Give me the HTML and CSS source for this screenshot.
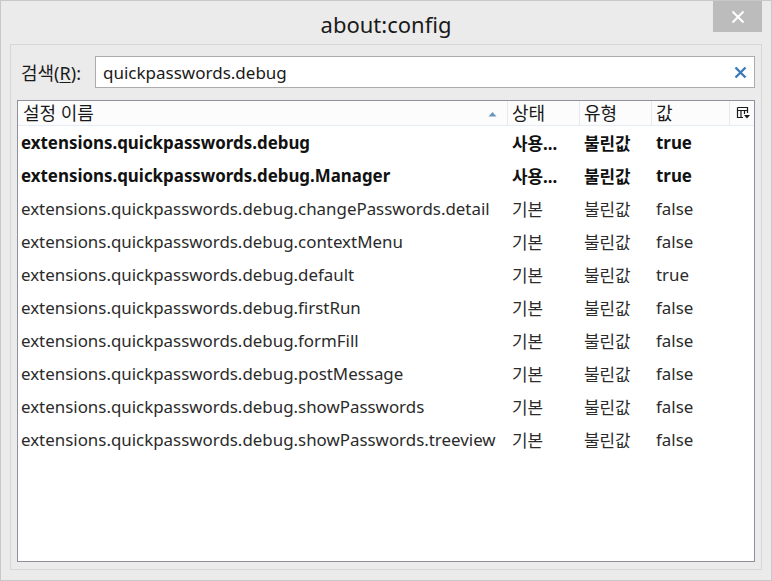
FILE: index.html
```html
<!DOCTYPE html>
<html lang="ko">
<head>
<meta charset="utf-8">
<link rel="stylesheet" href="styles.css">
</head>
<body>
<div class="window">
  <div class="titlebar">
    <div class="title">about:config</div>
    <div class="close">
      <svg width="14" height="14" viewBox="0 0 14 14"><path d="M1.5 1.5 L12.5 12.5 M12.5 1.5 L1.5 12.5" stroke="#fff" stroke-width="2" fill="none"/></svg>
    </div>
  </div>
  <div class="panel">
    <div class="search-row">
      <label class="search-label">검색(<u>R</u>):</label>
      <div class="search-box">
        <span class="search-text">quickpasswords.debug</span>
        <svg class="clear" width="13" height="13" viewBox="0 0 13 13"><path d="M1.5 1.5 L11.5 11.5 M11.5 1.5 L1.5 11.5" stroke="#3d7ab8" stroke-width="2.4" fill="none"/></svg>
      </div>
    </div>
    <div class="tree">
      <div class="row header">
        <div class="cell name">설정 이름<svg class="sort" width="9" height="6" viewBox="0 0 9 6"><path d="M0.5 5.5 L4.5 1 L8.5 5.5 Z" fill="#6a95bf"/></svg></div>
        <div class="cell status">상태</div>
        <div class="cell type">유형</div>
        <div class="cell value">값</div>
        <div class="cell picker">
          <svg width="15" height="14" viewBox="0 0 15 14"><path d="M1.5 1.5 H11.5 V7 M1.5 1.5 V11.5 H7 M1.5 4.5 H11.5 M5 4.5 V11.5 M8.5 4.5 V8" stroke="#1a1a1a" stroke-width="1.2" fill="none"/><path d="M8 9 H14 L11 12.5 Z" fill="#1a1a1a"/></svg>
        </div>
      </div>
      <div class="row bold"><div class="cell name">extensions.quickpasswords.debug</div><div class="cell status">사용...</div><div class="cell type">불린값</div><div class="cell value">true</div></div>
      <div class="row bold"><div class="cell name">extensions.quickpasswords.debug.Manager</div><div class="cell status">사용...</div><div class="cell type">불린값</div><div class="cell value">true</div></div>
      <div class="row"><div class="cell name">extensions.quickpasswords.debug.changePasswords.detail</div><div class="cell status">기본</div><div class="cell type">불린값</div><div class="cell value">false</div></div>
      <div class="row"><div class="cell name">extensions.quickpasswords.debug.contextMenu</div><div class="cell status">기본</div><div class="cell type">불린값</div><div class="cell value">false</div></div>
      <div class="row"><div class="cell name">extensions.quickpasswords.debug.default</div><div class="cell status">기본</div><div class="cell type">불린값</div><div class="cell value">true</div></div>
      <div class="row"><div class="cell name">extensions.quickpasswords.debug.firstRun</div><div class="cell status">기본</div><div class="cell type">불린값</div><div class="cell value">false</div></div>
      <div class="row"><div class="cell name">extensions.quickpasswords.debug.formFill</div><div class="cell status">기본</div><div class="cell type">불린값</div><div class="cell value">false</div></div>
      <div class="row"><div class="cell name">extensions.quickpasswords.debug.postMessage</div><div class="cell status">기본</div><div class="cell type">불린값</div><div class="cell value">false</div></div>
      <div class="row"><div class="cell name">extensions.quickpasswords.debug.showPasswords</div><div class="cell status">기본</div><div class="cell type">불린값</div><div class="cell value">false</div></div>
      <div class="row"><div class="cell name">extensions.quickpasswords.debug.showPasswords.treeview</div><div class="cell status">기본</div><div class="cell type">불린값</div><div class="cell value">false</div></div>
    </div>
  </div>
</div>
</body>
</html>
```

FILE: styles.css
```css
* { box-sizing: border-box; }
html, body { margin: 0; padding: 0; }
body {
  width: 772px;
  height: 581px;
  font-family: "Noto Sans", "Noto Sans CJK KR", sans-serif;
  color: #1a1a1a;
  background: #ebebeb;
}
.window {
  width: 772px;
  height: 581px;
  border: 1px solid #c8c8c8;
  background: #ebebeb;
  display: flex;
  flex-direction: column;
  padding: 0 9px 10px 9px;
}
.titlebar {
  height: 43px;
  display: flex;
  align-items: flex-start;
  justify-content: center;
  position: relative;
}
.title {
  font-family: "Noto Sans", sans-serif;
  font-size: 22px;
  line-height: 46px;
  color: #1a1a1a;
}
.close {
  position: absolute;
  right: 0;
  top: 0;
  width: 49px;
  height: 31px;
  background: #bcbcbc;
  display: flex;
  align-items: center;
  justify-content: center;
}
.panel {
  flex: 1;
  border: 1px solid #d7d7d7;
  display: flex;
  flex-direction: column;
  padding: 11px 6px 7px 6px;
}
.search-row {
  display: flex;
  align-items: center;
  height: 32px;
}
.search-label {
  width: 78px;
  padding-left: 4px;
  font-size: 18px;
  color: #1a1a1a;
}
.search-label u { text-decoration-thickness: 1px; text-underline-offset: 2px; }
.search-box {
  flex: 1;
  height: 32px;
  border: 1px solid #acacac;
  background: #fff;
  display: flex;
  align-items: center;
  padding: 0 7px 0 7px;
}
.search-text { flex: 1; font-size: 17px; color: #1a1a1a; }
.tree {
  margin-top: 12px;
  flex: 1;
  border: 1px solid #8f8f9d;
  background: #fff;
  font-size: 16.9px;
}
.row {
  display: grid;
  grid-template-columns: 490px 72px 72px 78px 1fr;
  height: 33px;
  align-items: center;
}
.row.header {
  height: 25px;
  background: #fcfcfd;
  border-bottom: 1px solid #e4ecf5;
  align-items: stretch;
  font-size: 18px;
}
.header .cell {
  border-right: 1px solid #e6eaf0;
  display: flex;
  align-items: center;
  line-height: 1;
}
.header .cell.picker { border-right: none; justify-content: center; }
.header .cell.name { justify-content: space-between; padding-right: 10px; padding-left: 5px; }
.sort { margin-top: 1px; }
.cell {
  white-space: nowrap;
  overflow: hidden;
  padding-left: 3px;
}
.cell.status, .cell.type, .cell.value { padding-left: 4px; }
.row:not(.header) .cell { color: #2b2b2b; }
.row.bold .cell { font-weight: 700; color: #111; }
```
